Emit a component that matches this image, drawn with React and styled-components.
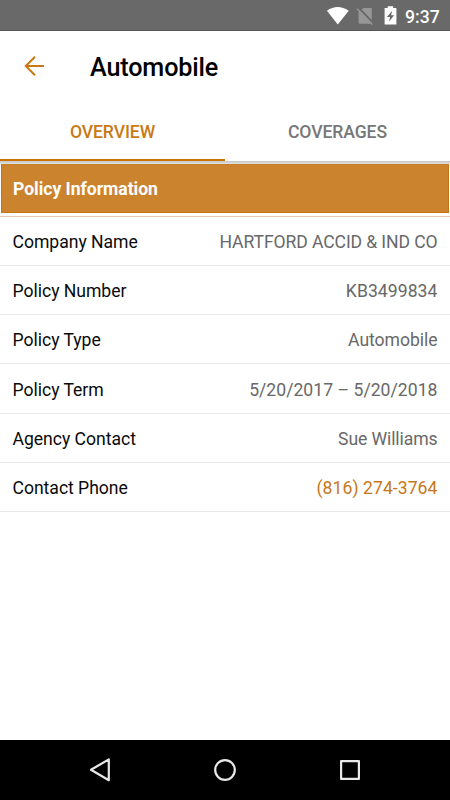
import React from 'react';
import styled, { createGlobalStyle } from 'styled-components';

const Global = createGlobalStyle`
  *, *::before, *::after { box-sizing: border-box; }
  body { margin: 0; background: #fff; font-family: Roboto, sans-serif; }
`;
const Screen = styled.div`
  width: 450px; height: 800px; display: flex; flex-direction: column;
  background: #fff; overflow: hidden;
`;
const StatusBar = styled.div`
  height: 31px; flex: none; display: flex; justify-content: flex-end;
  background: #696969; border-bottom: 1px solid #555;
`;
const StatusIcons = styled.svg`
  width: 76px; height: 30px; display: block;
`;
const Clock = styled.time`
  width: 45px; margin-left: 4px; color: #fff; font-size: 17.6px; font-weight: 500;
  line-height: 34px; white-space: nowrap;
`;
const Toolbar = styled.header`
  height: 72px; flex: none; display: flex; align-items: center; padding-left: 22px;
`;
const BackButton = styled.button`
  width: 24px; height: 24px; padding: 0; border: 0; background: none; display: block;
  svg { display: block; }
`;
const Title = styled.h1`
  margin: 2px 0 0 44px; color: #000; font-size: 25.2px; font-weight: 500; line-height: 32px;
  letter-spacing: -0.15px;
`;
const Tabs = styled.nav`
  height: 58px; flex: none; display: flex;
`;
const Tab = styled.button`
  flex: 1; padding: 0; border: 0; background: none;
  border-bottom: 2px solid ${p => (p.$active ? '#c87200' : 'transparent')};
  color: ${p => (p.$active ? '#c77a15' : '#777')};
  font: 500 17.6px/58px Roboto, sans-serif;
  letter-spacing: -0.1px;
`;
const Divider = styled.div`
  height: 3px; flex: none;
  background: linear-gradient(#cbcbcb 0 1px, #d0d1d2 1px 2px, #dedfe0 2px);
`;
const SectionHeader = styled.h2`
  height: 49px; flex: none; margin: 0 1px 3px; padding-left: 11px;
  border: 1px solid #c57614; border-top-color: #c77d24; background: #cc832d;
  color: #fff; font-size: 17.6px; font-weight: 700; line-height: 49px;
  letter-spacing: -0.04px;
`;
const Details = styled.dl`
  flex: none; margin: 0; border-top: 1px solid #e8c8b5;
`;
const Row = styled.div`
  height: ${p => p.$height || 49}px; display: flex; justify-content: space-between;
  padding: 0 12.5px; border-bottom: 1px solid #e9e9e9;
  font-size: 17.6px; line-height: ${p => (p.$height ? p.$height + 2 : 50)}px; white-space: nowrap;
`;
const Label = styled.dt`
  color: #0a0a0a; letter-spacing: -0.03px;
`;
const Value = styled.dd`
  margin: 0; color: ${p => (p.$link ? '#c87818' : '#686868')};
  letter-spacing: ${p => p.$tracking || 0}px;
`;
const NavBar = styled.nav`
  height: 60px; flex: none; margin-top: auto; background: #000;
  display: flex; justify-content: space-between; align-items: center; padding: 0 85px 0 84px;
`;
const NavButton = styled.button`
  width: 30px; height: 30px; padding: 0; border: 0; background: none;
  svg { display: block; }
`;

const rows = [
  { label: 'Company Name', value: 'HARTFORD ACCID & IND CO', tracking: -0.11 },
  { label: 'Policy Number', value: 'KB3499834', tracking: 0.05 },
  { label: 'Policy Type', value: 'Automobile', tracking: -0.05 },
  { label: 'Policy Term', value: '5/20/2017 – 5/20/2018', height: 50, tracking: 0.03 },
  { label: 'Agency Contact', value: 'Sue Williams', tracking: -0.1 },
  { label: 'Contact Phone', value: '(816) 274-3764', link: true, tracking: 0.05 },
];

export default function App() {
  return (
    <>
      <Global />
      <Screen>
        <StatusBar>
          <StatusIcons viewBox="0 0 76 30">
            <path d="M1.9 10.7Q12.7 3.2 23.7 10.7L12.8 24.6Z" fill="#fff" />
            <path d="M38.2 8H45.8Q46.8 8 46.8 9V23.8H34.6Q33.6 23.8 33.6 22.8V12.4Z" fill="#979797" />
            <path d="M33.3 7.6L48.4 23" stroke="#696969" strokeWidth="2" fill="none" />
            <path d="M32 8.8L47.2 24.4" stroke="#979797" strokeWidth="1.5" fill="none" />
            <path fillRule="evenodd" fill="#fff" d="M62.7 6.3h5.4v1.6H71.4v16.7H59.6V7.9h3.1ZM67.2 10.8L61.9 16.9h3.1l-.9 4.6 5.1-6.3h-3.1Z" />
          </StatusIcons>
          <Clock>9:37</Clock>
        </StatusBar>
        <Toolbar>
          <BackButton aria-label="Back">
            <svg width="24" height="24" viewBox="0 0 24 24" fill="none" stroke="#c87815" strokeWidth="2">
              <path d="M22 11H3.7M13 1.8L3.8 11L13 20.2" />
            </svg>
          </BackButton>
          <Title>Automobile</Title>
        </Toolbar>
        <Tabs>
          <Tab $active>OVERVIEW</Tab>
          <Tab>COVERAGES</Tab>
        </Tabs>
        <Divider />
        <SectionHeader>Policy Information</SectionHeader>
        <Details>
          {rows.map(r => (
            <Row key={r.label} $height={r.height}>
              <Label>{r.label}</Label>
              <Value $link={r.link} $tracking={r.tracking}>{r.value}</Value>
            </Row>
          ))}
        </Details>
        <NavBar>
          <NavButton aria-label="Back">
            <svg width="30" height="30" viewBox="0 0 30 30" fill="none" stroke="#e8e8e8" strokeWidth="2.2" strokeLinejoin="round">
              <path d="M24.8 4.4V25.2L7 14.8Z" />
            </svg>
          </NavButton>
          <NavButton aria-label="Home">
            <svg width="30" height="30" viewBox="0 0 30 30" fill="none" stroke="#e8e8e8" strokeWidth="2.2">
              <circle cx="15" cy="15" r="9.8" />
            </svg>
          </NavButton>
          <NavButton aria-label="Recent apps">
            <svg width="30" height="30" viewBox="0 0 30 30" fill="none" stroke="#e8e8e8" strokeWidth="2.2" strokeLinejoin="round">
              <rect x="6.1" y="6.1" width="17.8" height="17.8" />
            </svg>
          </NavButton>
        </NavBar>
      </Screen>
    </>
  );
}
